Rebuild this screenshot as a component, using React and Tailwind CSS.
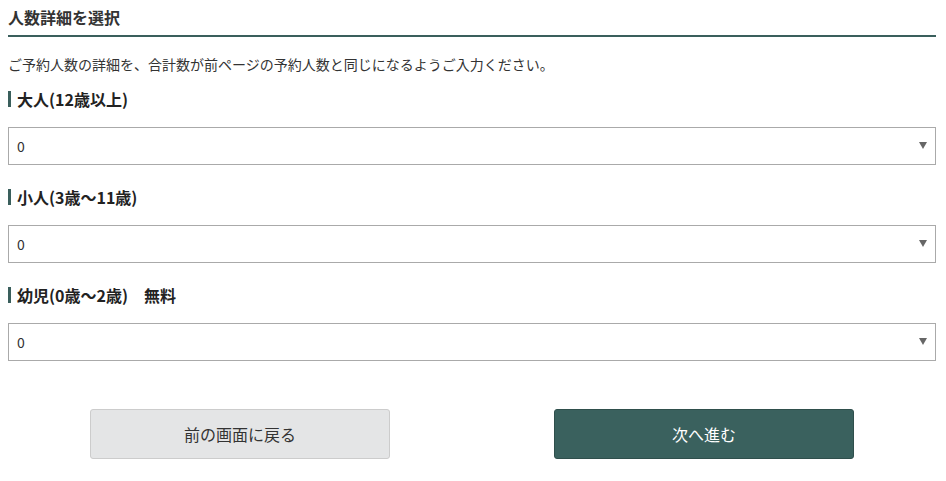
import React, { useState } from "react";

const groups = [
  { key: "adult", label: "大人(12歳以上)" },
  { key: "child", label: "小人(3歳〜11歳)" },
  { key: "infant", label: "幼児(0歳〜2歳)\u3000無料" },
];

function CountSelect({ value, onChange }) {
  return (
    <div className="relative">
      <select
        value={value}
        onChange={(e) => onChange(e.target.value)}
        className="block w-full h-[38px] appearance-none border border-[#aaaaaa] bg-white pl-2 pr-8 text-[14px] text-[#333333] outline-none"
      >
        {[...Array(10)].map((_, i) => (
          <option key={i} value={i}>
            {i}
          </option>
        ))}
      </select>
      {/* arrow */}
      <span className="pointer-events-none absolute right-[9px] top-[15px] h-0 w-0 border-x-[4px] border-t-[7px] border-x-transparent border-t-[#666666]" />
    </div>
  );
}

export default function App() {
  const [counts, setCounts] = useState({ adult: "0", child: "0", infant: "0" });

  return (
    <div
      className="min-h-screen bg-white pl-2 pr-[10px] pt-[6px] text-[#333333]"
      style={{ fontFamily: '"Noto Sans CJK JP", "Noto Sans", sans-serif' }}
    >
      <h2 className="border-b-2 border-[#3a5f5c] pb-[7px] text-[16px] font-bold leading-[22px]">
        人数詳細を選択
      </h2>

      <p className="mt-[17px] text-[14px] leading-5">
        ご予約人数の詳細を、合計数が前ページの予約人数と同じになるようご入力ください。
      </p>

      {groups.map((g, i) => (
        <div key={g.key} className={i === 0 ? "mt-[17px]" : "mt-6"}>
          <h3 className="border-l-[3px] border-[#3a5f5c] pl-[6px] text-[16px] font-bold leading-4 text-[#222222]">
            {g.label}
          </h3>
          <div className="mt-5">
            <CountSelect
              value={counts[g.key]}
              onChange={(v) => setCounts((c) => ({ ...c, [g.key]: v }))}
            />
          </div>
        </div>
      ))}

      <div className="mt-12 flex justify-center gap-[164px]">
        <button className="h-[50px] w-[300px] rounded-[3px] border border-[#cccccc] bg-[#e4e5e6] text-[16px] text-[#333333]">
          前の画面に戻る
        </button>
        <button className="h-[50px] w-[300px] rounded-[3px] border border-[#2f4f4c] bg-[#3a615e] text-[16px] text-white">
          次へ進む
        </button>
      </div>
    </div>
  );
}
